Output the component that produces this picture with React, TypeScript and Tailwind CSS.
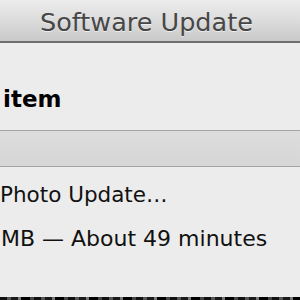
import React from 'react'

const font = "font-['DejaVu_Sans','Liberation_Sans',sans-serif]"

export default function App() {
  return (
    <div className={`w-[300px] h-[300px] overflow-hidden flex flex-col bg-[#ececec] ${font}`}>
      {/* Title bar */}
      <div className="h-[43px] shrink-0 border-b-2 border-[#6f6f6f] bg-[linear-gradient(180deg,#ececec_0%,#dcdcdc_50%,#c9c9c9_100%)]">
        <div className="pl-[40px] pt-[10px] text-[25.5px] leading-none text-[#474747] [text-shadow:0_1px_0_rgba(255,255,255,0.6)] whitespace-nowrap">
          Software Update
        </div>
      </div>

      {/* Header */}
      <div className="mt-[45px] pl-[3px] text-[23px] leading-none font-bold text-black whitespace-nowrap">
        item
      </div>

      {/* Section band */}
      <div className="mt-[19px] h-[37px] shrink-0 border-y border-[#a4a4a4] bg-[linear-gradient(180deg,#dddddd_0%,#d6d6d6_100%)]" />

      {/* Update row */}
      <div className="mt-[17px] text-[21.5px] leading-none text-[#111] whitespace-nowrap">
        Photo Update…
      </div>
      <div className="mt-[22px] pl-[1px] text-[22px] leading-none text-[#111] whitespace-nowrap">
        MB — About 49 minutes
      </div>

      {/* List edge */}
      <div className="mt-auto h-[3px] shrink-0 bg-[repeating-linear-gradient(90deg,#111_0_7px,#555_7px_11px,#1a1a1a_11px_18px,#777_18px_21px,#000_21px_30px,#444_30px_34px)]" />
    </div>
  )
}
